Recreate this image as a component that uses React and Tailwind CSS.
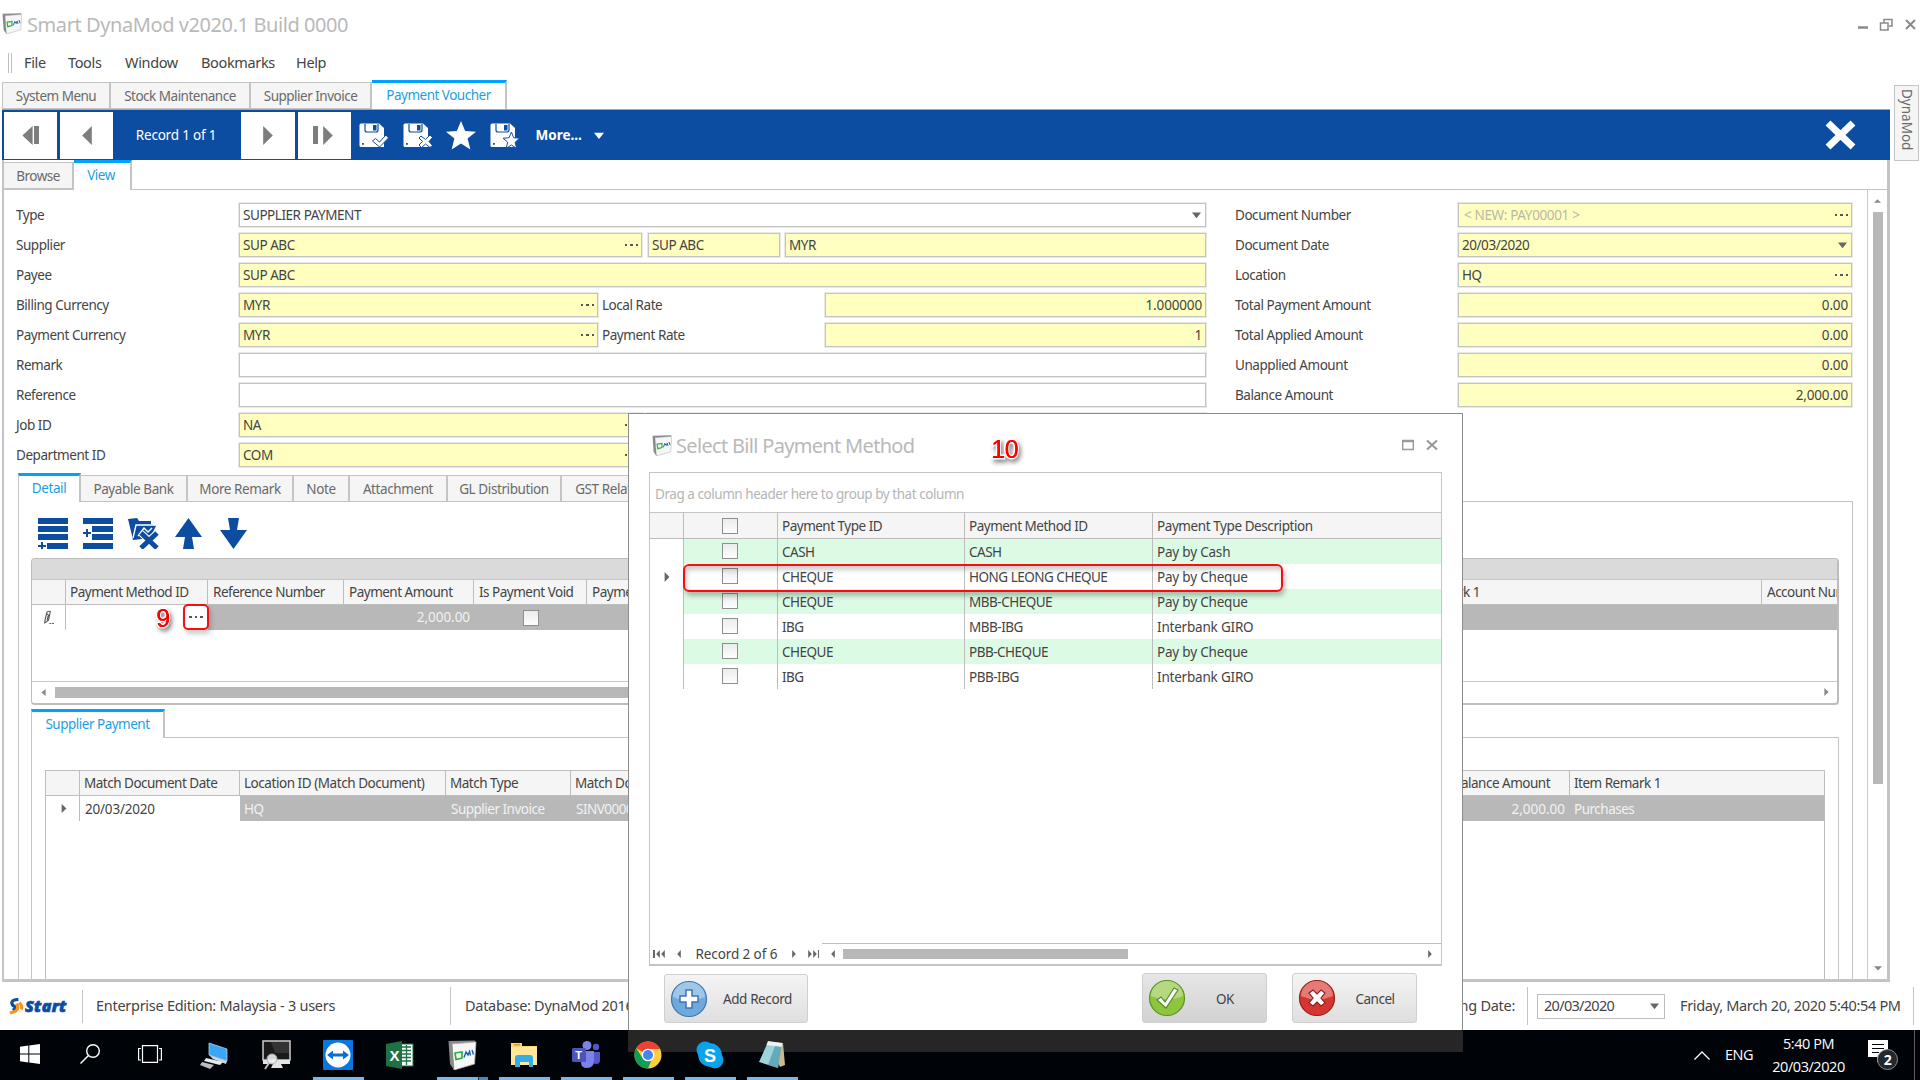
import React from "react";
import clsx from "clsx";

const docTabs = [
  { label: "System Menu", width: "w-[109px]" },
  { label: "Stock Maintenance", width: "w-[140px]" },
  { label: "Supplier Invoice", width: "w-[121px]" },
  { label: "Payment Voucher", width: "w-[135px]", active: true },
];

const detailTabs = [
  { label: "Detail", width: "w-[63px]", active: true },
  { label: "Payable Bank", width: "w-[107px]" },
  { label: "More Remark", width: "w-[106px]" },
  { label: "Note", width: "w-[56px]" },
  { label: "Attachment", width: "w-[98px]" },
  { label: "GL Distribution", width: "w-[114px]" },
  { label: "GST Related", width: "w-[100px]" },
];

const paymentMethods = [
  { type: "CASH", method: "CASH", description: "Pay by Cash" },
  { type: "CHEQUE", method: "HONG LEONG CHEQUE", description: "Pay by Cheque" },
  { type: "CHEQUE", method: "MBB-CHEQUE", description: "Pay by Cheque" },
  { type: "IBG", method: "MBB-IBG", description: "Interbank GIRO" },
  { type: "CHEQUE", method: "PBB-CHEQUE", description: "Pay by Cheque" },
  { type: "IBG", method: "PBB-IBG", description: "Interbank GIRO" },
];

const Triangle = ({ dir = "down", className = "" }) => {
  const points = {
    down: "0,2 10,2 5,9",
    up: "0,8 10,8 5,2",
    left: "8,0 8,10 2,5",
    right: "2,0 2,10 8,5",
  };
  return (
    <svg viewBox="0 0 10 10" preserveAspectRatio="none" className={clsx("shrink-0", className)} fill="currentColor">
      <polygon points={points[dir]} />
    </svg>
  );
};

const DmIcon = ({ className }) => (
  <svg viewBox="0 0 28 30" className={clsx("shrink-0", className)}>
    <path d="M0.500 1 L27 0.500 L27.500 3 L4 5 Z" fill="#8a8a8a" />
    <path d="M4 4 L28 2 L26.500 24 L6 30 Z" fill="#f6f6f6" stroke="#b5b5b5" strokeWidth="0.800" />
    <path d="M0.500 1 L4 4 L6 30 L2 24 Z" fill="#8a8a8a" />
    <path d="M7 13 L14 12 V18 L8 19.500 Z" fill="none" stroke="#2fb043" strokeWidth="1.700" />
    <path d="M16 17.500 L18 12 L20 15 L21.500 11.500 L22.500 15.500 M24 10 L25.500 14.500" fill="none" stroke="#1a5fb4" strokeWidth="1.400" />
  </svg>
);

const Tab = ({ label, width, active, className }) => (
  <div
    className={clsx(
      "flex shrink-0 items-center justify-center border-r-2 border-[#c4c4c4] whitespace-nowrap",
      width,
      active
        ? "h-[29px] border-t-[3px] border-t-[#00a2ff] bg-white pb-0.5 text-[#1b9fe4]"
        : "h-[27px] border-y border-y-[#c4c4c4] bg-[#f5f5f5] pt-px text-[#6a6a6a]",
      className
    )}
  >
    {label}
  </div>
);

const Field = ({ value, width, white, dots, arrow, right, muted }) => (
  <div
    className={clsx(
      "flex h-6 shrink-0 items-center justify-between border border-[#c3c3c3] px-[3px] whitespace-nowrap shadow-[0_0_0_1px_#e9e9e9]",
      width,
      white ? "bg-white" : "bg-[#ffffbf]",
      muted && "text-[#b9b9a5]"
    )}
  >
    <span className={clsx(right && "ml-auto tracking-[-0.150px]", muted && "pl-0.5 tracking-[-0.350px]")}>{value}</span>
    {dots && <Dots />}
    {arrow && <Triangle className="mr-px h-[8px] w-[9px] text-[#666]" />}
  </div>
);

const Dots = () => (
  <span className="flex gap-[3px]">
    <i className="size-[2.500px] bg-[#555]" />
    <i className="size-[2.500px] bg-[#555]" />
    <i className="size-[2.500px] bg-[#555]" />
  </span>
);

const Checkbox = () => (
  <span className="size-4 border-[1.500px] border-[#8f8f8f] bg-linear-to-b from-[#ececec] to-[#fdfdfd]" />
);

const Cell = ({ width, children, className }) => (
  <div
    className={clsx(
      "flex h-full shrink-0 items-center overflow-hidden border-r border-[#bdbdbd] pl-1 whitespace-nowrap",
      width,
      className
    )}
  >
    {children}
  </div>
);

const Floppy = ({ children }) => (
  <svg viewBox="0 0 30 25" className="h-[25px] w-[30px]">
    <path d="M2 0.500 H20 L25 5 V24 H2 Q0.500 24 0.500 22.500 V2 Q0.500 0.500 2 0.500 Z" fill="#fff" />
    <path d="M6 1 V7 Q6 9 8 9 H17 Q19 9 19 7 V1" fill="none" stroke="#0d4da1" strokeWidth="1.200" />
    <rect x="14" y="2" width="3.500" height="5.500" fill="#0d4da1" />
    <rect x="3" y="20" width="1.800" height="1.800" fill="#0d4da1" />
    {children}
  </svg>
);

const STAR = "12,0 15.300,8.200 24,8.900 17.300,14.500 19.500,23.500 12,18.600 4.500,23.500 6.700,14.500 0,8.900 8.700,8.200";

const RecordBar = () => (
  <div className="flex h-[51px] items-center border-t border-[#9aa7b8] bg-[#0d4da1] pl-0.5 text-white">
    <div className="flex h-[47px] w-[53px] items-center justify-center bg-white pr-1 text-[#7d7d7d]">
      <Triangle dir="left" className="-mr-0.5 h-[19px] w-[17px]" />
      <span className="h-[18px] w-[5px] bg-current" />
    </div>
    <div className="ml-[3px] flex h-[47px] w-[53px] items-center justify-center bg-white text-[#7d7d7d]">
      <Triangle dir="left" className="h-[19px] w-[16px]" />
    </div>
    <div className="w-[128px] pr-0.5 text-center tracking-[-0.200px]">Record 1 of 1</div>
    <div className="flex h-[47px] w-[54px] items-center justify-center bg-white text-[#7d7d7d]">
      <Triangle dir="right" className="h-[19px] w-[16px]" />
    </div>
    <div className="ml-[3px] flex h-[47px] w-[53px] items-center justify-center bg-white text-[#7d7d7d]">
      <span className="h-[18px] w-[5px] bg-current" />
      <Triangle dir="right" className="ml-0.5 h-[19px] w-[16px]" />
    </div>
    <div className="ml-[8px] flex items-center gap-[13.500px]">
      <Floppy>
        <path d="M13.500 18 L16.500 15.500 L20.500 19 L27 12 L29.500 15 L20.500 24 Z" fill="#fff" stroke="#0d4da1" strokeWidth="1" />
      </Floppy>
      <Floppy>
        <path d="M18 13 L22.500 16.500 L27 12 L29.500 14.500 L26 18.500 L29.500 22.500 L27 24.500 L22.500 21 L18.500 24.500 L16 22 L19.500 18.500 L16 15 Z" fill="#fff" stroke="#0d4da1" strokeWidth="1" />
      </Floppy>
      <svg viewBox="0 0 24 24" className="h-[29px] w-[30px]" preserveAspectRatio="none" fill="#fff">
        <polygon points={STAR} />
      </svg>
      <Floppy>
        <polygon points={STAR} transform="translate(13 9) scale(0.700)" fill="#fff" stroke="#0d4da1" strokeWidth="1.400" />
      </Floppy>
    </div>
    <span className="ml-4 font-bold tracking-[0px]">More...</span>
    <Triangle className="ml-3 h-[9px] w-[10px]" />
    <svg viewBox="0 0 31 30" className="mr-[34px] ml-auto h-[30px] w-[31px]">
      <path d="M3 3 L28 27 M28 3 L3 27" stroke="#fff" strokeWidth="7" />
    </svg>
  </div>
);

const Label = ({ width, children }) => (
  <div className={clsx("shrink-0 whitespace-nowrap", width)}>{children}</div>
);

const Row = ({ children }) => <div className="flex h-6 items-center">{children}</div>;

const Form = () => (
  <div className="flex pt-[13px] pl-[12px] tracking-[-0.450px]">
    <div className="flex w-[1219px] flex-col gap-1.5">
      <Row>
        <Label width="w-[223px]">Type</Label>
        <Field width="w-[967px]" white arrow value="SUPPLIER PAYMENT" />
      </Row>
      <Row>
        <Label width="w-[223px]">Supplier</Label>
        <Field width="w-[403px]" dots value="SUP ABC" />
        <div className="w-[6px]" />
        <Field width="w-[132px]" value="SUP ABC" />
        <div className="w-[5px]" />
        <Field width="w-[421px]" value="MYR" />
      </Row>
      <Row>
        <Label width="w-[223px]">Payee</Label>
        <Field width="w-[967px]" value="SUP ABC" />
      </Row>
      <Row>
        <Label width="w-[223px]">Billing Currency</Label>
        <Field width="w-[359px]" dots value="MYR" />
        <Label width="w-[227px] pl-1">Local Rate</Label>
        <Field width="w-[381px]" right value="1.000000" />
      </Row>
      <Row>
        <Label width="w-[223px]">Payment Currency</Label>
        <Field width="w-[359px]" dots value="MYR" />
        <Label width="w-[227px] pl-1">Payment Rate</Label>
        <Field width="w-[381px]" right value="1" />
      </Row>
      <Row>
        <Label width="w-[223px]">Remark</Label>
        <Field width="w-[967px]" white />
      </Row>
      <Row>
        <Label width="w-[223px]">Reference</Label>
        <Field width="w-[967px]" white />
      </Row>
      <Row>
        <Label width="w-[223px]">Job ID</Label>
        <Field width="w-[403px]" dots value="NA" />
        <div className="w-[6px]" />
        <Field width="w-[558px]" />
      </Row>
      <Row>
        <Label width="w-[223px]">Department ID</Label>
        <Field width="w-[403px]" dots value="COM" />
      </Row>
    </div>
    <div className="flex flex-col gap-1.5">
      <Row>
        <Label width="w-[223px]">Document Number</Label>
        <Field width="w-[394px]" dots muted value="< NEW: PAY00001 >" />
      </Row>
      <Row>
        <Label width="w-[223px]">Document Date</Label>
        <Field width="w-[394px]" arrow value="20/03/2020" />
      </Row>
      <Row>
        <Label width="w-[223px]">Location</Label>
        <Field width="w-[394px]" dots value="HQ" />
      </Row>
      <Row>
        <Label width="w-[223px]">Total Payment Amount</Label>
        <Field width="w-[394px]" right value="0.00" />
      </Row>
      <Row>
        <Label width="w-[223px]">Total Applied Amount</Label>
        <Field width="w-[394px]" right value="0.00" />
      </Row>
      <Row>
        <Label width="w-[223px]">Unapplied Amount</Label>
        <Field width="w-[394px]" right value="0.00" />
      </Row>
      <Row>
        <Label width="w-[223px]">Balance Amount</Label>
        <Field width="w-[394px]" right value="2,000.00" />
      </Row>
    </div>
  </div>
);

const GridTools = () => (
  <div className="flex h-[31px] items-center pl-[19px] text-[#0d4da1]">
    <svg viewBox="0 0 30 31" className="w-[30px]" fill="currentColor">
      <path d="M0 0H30V6H0ZM0 8H30V14H0ZM0 16H30V22H0ZM9 25H30V31H9ZM0 27H3V24H5V27H8V29H5V31H3V29H0Z" />
    </svg>
    <svg viewBox="0 0 30 31" className="ml-[15px] w-[30px]" fill="currentColor">
      <path d="M0 0H30V6H0ZM9 8H30V14H9ZM9 16H30V22H9ZM0 25H30V31H0ZM0 14H3V11H5V14H8V16H5V19H3V16H0Z" />
    </svg>
    <svg viewBox="0 0 31 31" className="ml-[15px] w-[31px]">
      <path d="M0 1 L9 0 L11 3 H23 V6 L28 8 L24 16 L14 21 L5 22 Z" fill="currentColor" />
      <path d="M5 20 L8 7 H27 M10 18 L16 10 L20 14 L24 10" fill="none" stroke="#fff" strokeWidth="1.400" />
      <path d="M13 15 L29 30 M29 15 L13 30" stroke="#fff" strokeWidth="7" />
      <path d="M13 15 L29 30 M29 15 L13 30" stroke="currentColor" strokeWidth="5" />
    </svg>
    <svg viewBox="0 0 27 31" className="ml-4 w-[27px]" fill="currentColor">
      <path d="M13.500 0 L27 19 H17 L19 31 H8 L10 19 H0 Z" />
    </svg>
    <svg viewBox="0 0 27 31" className="ml-[18px] w-[27px]" fill="currentColor">
      <path d="M13.500 31 L27 12 H17 L19 0 H8 L10 12 H0 Z" />
    </svg>
  </div>
);

const PaymentGrid = () => (
  <div className="relative ml-[12px] h-[147px] w-[1808px] shrink-0 overflow-hidden rounded border border-r-2 border-b-2 border-[#bdbdbd]">
    <div className="h-[21px] border-b border-[#c4c4c4] bg-[#dadada]" />
    <div className="flex h-[25px] border-b border-[#bdbdbd] bg-[#f5f5f5]">
      <Cell width="w-[34px]" />
      <Cell width="w-[142px]">Payment Method ID</Cell>
      <Cell width="w-[136px]" className="pl-[5px]!">Reference Number</Cell>
      <Cell width="w-[130px]" className="pl-[5px]!">Payment Amount</Cell>
      <Cell width="w-[113px]" className="pl-[5px]!">Is Payment Void</Cell>
      <Cell width="w-[783px]" className="pl-[5px]!">Payment Void Date</Cell>
      <Cell width="w-[392px]" className="pl-[23px]!">Item Remark 1</Cell>
      <div className="pl-[5px] leading-6 whitespace-nowrap">Account Number</div>
    </div>
    <div className="flex h-[25px] bg-[#b8b8b8] text-[#f2f2f2]">
      <Cell width="w-[34px]" className="justify-center bg-white pr-1">
        <svg viewBox="0 0 12 16" className="h-[15px] w-[11px]" fill="none" stroke="#555" strokeWidth="1.200">
          <path d="M2 12 L4 3 Q5 0.500 8 1.500 L6 11 L2 14 Z M4 4 L6 5 M4.500 11 L6 5" />
          <path d="M7 14.500 H12" strokeDasharray="2 1" />
        </svg>
      </Cell>
      <div className="w-[142px] bg-white" />
      <div className="flex w-[266px] items-center justify-end pr-1 tracking-[-0.050px]">2,000.00</div>
      <div className="flex w-[113px] items-center justify-center">
        <Checkbox />
      </div>
    </div>
    <div className="h-[52px] border-b border-[#c9c9c9]" />
    <div className="flex h-[20px] items-center gap-2 pr-[7px] pl-2 text-[#888]">
      <Triangle dir="left" className="h-[7px] w-[7px]" />
      <div className="h-[11px] w-[1100px] bg-[#b8b8b8]" />
      <Triangle dir="right" className="ml-auto h-[8px] w-[7px]" />
    </div>
  </div>
);

const MatchGrid = () => (
  <div className="ml-[13px] w-[1780px] flex-1 border border-b-0 border-[#bdbdbd]">
    <div className="flex h-[25px] border-b border-[#bdbdbd] bg-[#f5f5f5]">
      <Cell width="w-[34px]" />
      <Cell width="w-[160px]">Match Document Date</Cell>
      <Cell width="w-[206px]" className="tracking-[-0.450px]">Location ID (Match Document)</Cell>
      <Cell width="w-[125px]">Match Type</Cell>
      <Cell width="w-[867px]">Match Document No</Cell>
      <Cell width="w-[132px]" className="justify-end pr-[19px]">Balance Amount</Cell>
      <div className="pl-1 leading-6">Item Remark 1</div>
    </div>
    <div className="flex h-[25px] bg-[#b8b8b8] text-[#f2f2f2]">
      <Cell width="w-[34px]" className="justify-center bg-white pr-0.5 text-[#666]">
        <Triangle dir="right" className="h-[9px] w-[8px]" />
      </Cell>
      <div className="w-[160px] bg-white pl-[5px] leading-[26px] tracking-[-0.200px] text-[#444]">20/03/2020</div>
      <div className="w-[206px] pl-[4px] leading-[26px]">HQ</div>
      <div className="w-[125px] pl-[5px] leading-[26px]">Supplier Invoice</div>
      <div className="w-[867px] pl-[5px] leading-[26px]">SINV00001</div>
      <div className="w-[132px] pr-[5px] text-right leading-[26px] tracking-[0px]">2,000.00</div>
      <div className="pl-1 leading-[26px]">Purchases</div>
    </div>
  </div>
);

const StatusBar = () => (
  <div className="flex h-[48px] shrink-0 items-center text-[14.500px] tracking-[-0.280px] whitespace-nowrap text-[#444]">
    <div className="flex h-[33px] w-[83px] items-center border-r border-[#c4c4c4] pl-[9px]">
      <svg viewBox="0 0 16 18" className="mr-px h-[17px] w-[15px]" fill="none" strokeWidth="3.400">
        <path d="M10 1.500 Q3 2 3 5 Q3 7.500 6 9 Q8 11 4 13" stroke="#0d4da1" />
        <path d="M11 5 Q15 9 13 12 M8 6 Q11 11 7 14 L1 16" stroke="#f7941d" />
      </svg>
      <span className="text-[16px] font-black tracking-[0.300px] text-[#0d4da1] italic [-webkit-text-stroke:0.700px_#0d4da1]">
        Start
      </span>
    </div>
    <div className="flex h-[38px] w-[368px] items-center border-r border-[#c4c4c4] pl-[13px]">
      Enterprise Edition: Malaysia - 3 users
    </div>
    <div className="w-[300px] pl-[14px]">Database: DynaMod 2016</div>
    <div className="ml-auto flex h-[38px] items-center border-r border-[#c4c4c4] pr-[12px]">Working Date:</div>
    <div className="ml-[9px] flex h-[25px] w-[128px] items-center justify-between border border-[#bdbdbd] px-[6px] tracking-[-0.700px]">
      20/03/2020
      <Triangle className="-mr-px h-[8px] w-[9px] text-[#666]" />
    </div>
    <div className="mr-[6px] ml-[15px] flex h-[38px] w-[234px] items-center border-r border-[#c4c4c4] tracking-[-0.330px]">
      Friday, March 20, 2020 5:40:54 PM
    </div>
  </div>
);

const taskbarApps = [
  {
    id: "pc",
    icon: (
      <svg viewBox="0 0 30 30" className="size-[30px]">
        <path d="M10 3 L28 9 L28 21 L10 15 Z" fill="#3ea5f5" stroke="#9fd4fa" strokeWidth="0.800" />
        <path d="M10 15 L28 21 L27 24 L14 19 Z" fill="#cfd6db" />
        <path d="M7 18 L24 22 L21 25 L5 21 Z" fill="#e7eaec" />
        <path d="M3 22 L15 25 L11 29 L1 25 Z" fill="#b7bfc4" />
      </svg>
    ),
  },
  {
    id: "remote",
    icon: (
      <svg viewBox="0 0 30 30" className="size-[30px]">
        <rect x="2" y="1" width="27" height="19" fill="#1a1a1a" stroke="#cfcfcf" strokeWidth="1.500" />
        <path d="M10 2 L14 13 H28 V2 Z" fill="#333" />
        <path d="M2 20 H29 V24 H20 L22 28 H10 L12 24 H2 Z" fill="#e4e4e4" />
        <circle cx="11" cy="19" r="5" fill="#e9ecee" fillOpacity="0.900" stroke="#aaa" />
        <path d="M8 23 L4 29" stroke="#bbb" strokeWidth="2" />
      </svg>
    ),
  },
  {
    id: "teamviewer",
    bar: true,
    icon: (
      <svg viewBox="0 0 30 30" className="size-[30px]">
        <rect width="30" height="30" rx="1" fill="#0b77dd" />
        <circle cx="15" cy="15" r="12.500" fill="#fff" />
        <path d="M4 15 L10 10.500 V13.500 H20 V10.500 L26 15 L20 19.500 V16.500 H10 V19.500 Z" fill="#0b6fd2" />
      </svg>
    ),
  },
  {
    id: "excel",
    icon: (
      <svg viewBox="0 0 30 30" className="size-[30px]">
        <rect x="15" y="4" width="13" height="22" fill="#fff" stroke="#1e7145" />
        <path d="M17 7H26M17 10.500H26M17 14H26M17 17.500H26M17 21H26M21.500 5V25" stroke="#1e7145" strokeWidth="1.300" />
        <path d="M1 4 L17 1 V29 L1 26 Z" fill="#1e7145" />
        <text x="4.500" y="20.500" fontSize="15" fontWeight="bold" fill="#fff" fontFamily="Liberation Sans">X</text>
      </svg>
    ),
  },
  { id: "dynamod", bar: true, stacked: true, icon: <DmIcon className="size-[30px]" /> },
  {
    id: "explorer",
    bar: true,
    icon: (
      <svg viewBox="0 0 30 30" className="size-[30px]">
        <path d="M2 3 H13 V6 H28 V25 H2 Z" fill="#f8d775" />
        <path d="M2 7 H28 V25 H2 Z" fill="#ffe69a" />
        <rect x="5" y="4" width="6" height="1.500" fill="#e49b1d" />
        <path d="M6 27 V18 Q6 15 9 15 H21 Q24 15 24 18 V27 H20 V22 H11 V27 Z" fill="#35aee8" />
      </svg>
    ),
  },
  {
    id: "teams",
    bar: true,
    icon: (
      <svg viewBox="0 0 30 30" className="size-[30px]">
        <circle cx="16" cy="5.500" r="4.500" fill="#7b83eb" />
        <circle cx="25" cy="7" r="3.200" fill="#5059c9" />
        <path d="M21 12 H29 V20 Q29 24 25 24 Q22 24 21 22 Z" fill="#5059c9" />
        <path d="M10 11 H23 V20 Q23 28 16 28 Q10 28 10 22 Z" fill="#7b83eb" />
        <rect x="1" y="8" width="14" height="14" rx="1.500" fill="#4b53bc" />
        <text x="4.200" y="19" fontSize="11" fontWeight="bold" fill="#fff" fontFamily="Liberation Sans">T</text>
      </svg>
    ),
  },
  {
    id: "chrome",
    bar: true,
    icon: (
      <svg viewBox="0 0 30 30" className="size-[30px]">
        <circle cx="15" cy="15" r="13.500" fill="#ffcd40" />
        <path d="M15 15 L3.300 8.200 A13.500 13.500 0 0 1 26.700 8.200 L27 9 H15 Z" fill="#ea4335" />
        <path d="M15 28.500 A13.500 13.500 0 0 1 3.300 8.200 L9.500 18 L15 21 L18.500 20 Z" fill="#0f9d58" />
        <circle cx="15" cy="15" r="6.300" fill="#fff" />
        <circle cx="15" cy="15" r="5" fill="#4285f4" />
      </svg>
    ),
  },
  {
    id: "skype",
    bar: true,
    icon: (
      <svg viewBox="0 0 30 30" className="size-[30px]">
        <circle cx="10" cy="10" r="8.500" fill="#0a9fe6" />
        <circle cx="20" cy="20" r="8.500" fill="#0a9fe6" />
        <circle cx="15" cy="15" r="11.800" fill="#0ba4ea" />
        <text x="9" y="21.500" fontSize="18" fontWeight="bold" fill="#fff" fontFamily="Liberation Sans">S</text>
      </svg>
    ),
  },
  {
    id: "notepad",
    bar: true,
    icon: (
      <svg viewBox="0 0 30 30" className="size-[30px]">
        <path d="M12 2 L26 3 L28 25 L23 27 Z" fill="#c9b98b" />
        <path d="M11 2 L25 4 L21 28 L2 22 Z" fill="#9fd3dc" />
        <path d="M11 1 L25 3 L24.500 7 L9.500 5 Z" fill="#e8f4f5" />
        <path d="M18 6 L24.500 7 L21 28 L11 25 Z" fill="#3d8fa0" fillOpacity="0.600" />
      </svg>
    ),
  },
];

const Taskbar = () => (
  <div className="relative flex h-[50px] shrink-0 bg-[#000308] text-white">
    <div className="absolute top-0 left-[628px] h-[22px] w-[835px] bg-[#262626]" />
    <div className="relative flex w-[183px] items-center pb-0.5">
      <svg viewBox="0 0 20 20" className="ml-5 size-5" fill="#fff">
        <path d="M0 2.800 L8.300 1.600 V9.500 H0 Z M9.300 1.500 L20 0 V9.500 H9.300 Z M0 10.500 H8.300 V18.400 L0 17.200 Z M9.300 10.500 H20 V20 L9.300 18.500 Z" />
      </svg>
      <svg viewBox="0 0 20 20" className="ml-10 size-5" fill="none" stroke="#fff" strokeWidth="1.400">
        <circle cx="13" cy="7" r="6.300" />
        <path d="M8.500 11.500 L0.500 19.500" />
      </svg>
      <svg viewBox="0 0 24 18" className="ml-[38px] h-[18px] w-6" fill="none" stroke="#fff" strokeWidth="1.200">
        <path d="M4.500 0.600 H19.500 V17.400 H4.500 Z M3 3.500 H0.600 V15 H3 M21 3.500 H23.400 V15 H21" />
      </svg>
    </div>
    {taskbarApps.map(({ id, icon, bar, stacked }) => (
      <div key={id} className="relative flex w-[62px] flex-col items-center pt-[10px]">
        {icon}
        {bar && (
          <div className="mt-[7px] flex h-[3px] w-[51px] bg-[#76b9ed]">
            {stacked && <span className="ml-auto w-2.5 border-l border-[#1c3350] bg-[#5187b5]" />}
          </div>
        )}
      </div>
    ))}
    <div className="relative ml-auto flex items-center font-['Open_Sans'] text-[14.500px] tracking-[-0.450px]">
      <svg viewBox="0 0 16 9" className="h-[9px] w-4" fill="none" stroke="#fff" strokeWidth="1.300">
        <path d="M0.500 8.500 L8 1 L15.500 8.500" />
      </svg>
      <span className="ml-[15px] w-[30px]">ENG</span>
      <div className="ml-[14px] w-[79px] text-center leading-[23px]">
        <div>5:40 PM</div>
        <div>20/03/2020</div>
      </div>
      <svg viewBox="0 0 32 32" className="mr-[15px] ml-[19px] size-8">
        <path d="M1 1 H21 V18 H15 L10 23 V18 H1 Z" fill="#fff" />
        <path d="M5 5.500 H17 M5 9.500 H17 M5 13.500 H12" stroke="#000308" strokeWidth="1.200" />
        <circle cx="20.500" cy="20.500" r="10" fill="#24272b" stroke="#8a8d90" />
        <text x="16.700" y="25.800" fontSize="14" fontWeight="bold" fill="#fff" fontFamily="Open Sans">2</text>
      </svg>
    </div>
    <div className="h-full w-[6px] border-l border-[#5a5d61]" />
  </div>
);

const DialogButton = ({ label, width, color, rim, children, className }) => (
  <div
    className={clsx(
      "flex items-center rounded-[3px] border border-[#cfcfcf] bg-linear-to-b from-[#f4f4f4] to-[#dfdfdf] pl-[5px]",
      width,
      className
    )}
  >
    <svg viewBox="0 0 38 38" className="size-[38px] shrink-0">
      <circle cx="19" cy="19" r="17.500" fill={color} stroke={rim} strokeWidth="1.200" />
      <path d="M3 17 A16 15 0 0 1 35 17 Q19 24 3 17 Z" fill="#fff" fillOpacity="0.350" />
      {children}
    </svg>
    <span className="flex-1 pt-0.5 text-center">{label}</span>
  </div>
);

const Callout = ({ children, className }) => (
  <span className={clsx("absolute grid font-['Liberation_Sans'] leading-none", className)}>
    <span className="tracking-[-0.500px] text-[#f00] [filter:drop-shadow(2px_3px_2px_rgba(0,0,0,0.45))] [paint-order:stroke] [text-shadow:0.500px_0_0_#f00] [-webkit-text-stroke:3px_white]">
      {children}
    </span>
  </span>
);

const Dialog = () => (
  <div className="absolute top-[413px] left-[628px] flex h-[617px] w-[835px] flex-col border border-b-0 border-[#8d8d8d] bg-white">
    <div className="flex h-[58px] items-center pt-1.5 pr-[24px] pl-[23px]">
      <DmIcon className="mb-0.5 h-[21px] w-[20px]" />
      <span className="ml-1 text-[20px] tracking-[-0.680px] text-[#b9b9b9]">Select Bill Payment Method</span>
      <svg viewBox="0 0 36 12" className="mb-0.5 ml-auto h-3 w-9" fill="none" stroke="#999">
        <path d="M0.700 1.500 H11.300 V10.500 H0.700 Z M0.700 2.500 H11.300" strokeWidth="1.400" />
        <path d="M25 1.500 L35 10.500 M35 1.500 L25 10.500" strokeWidth="2.200" />
      </svg>
    </div>
    <div className="mx-5 flex h-[494px] w-[793px] flex-col border border-b-2 border-[#c4c4c4]">
      <div className="flex h-[40px] items-center border-b border-[#c4c4c4] pt-1 pl-[5px] tracking-[-0.450px] text-[#b5b5b5]">
        Drag a column header here to group by that column
      </div>
      <div className="flex h-[26px] shrink-0 border-b border-[#bdbdbd] bg-[#f5f5f5]">
        <Cell width="w-[34px]" />
        <Cell width="w-[94px]" className="justify-center pr-1.5">
          <Checkbox />
        </Cell>
        <Cell width="w-[187px]" className="pt-px">Payment Type ID</Cell>
        <Cell width="w-[188px]" className="pt-px">Payment Method ID</Cell>
        <Cell width="w-[200px]" className="border-r-0 pt-px tracking-[-0.420px]">Payment Type Description</Cell>
      </div>
      {paymentMethods.map(({ type, method, description }, index) => (
        <div key={method} className={clsx("flex h-[25px] shrink-0", index % 2 === 0 ? "bg-[#dcfbe4]" : "bg-white")}>
          <Cell width="w-[34px]" className="justify-center bg-white pr-1 text-[#666]">
            {index === 1 && <Triangle dir="right" className="h-[10px] w-[8px]" />}
          </Cell>
          <Cell width="w-[94px]" className="justify-center pr-1.5 pb-px">
            <Checkbox />
          </Cell>
          <Cell width="w-[187px]" className="pt-px">{type}</Cell>
          <Cell width="w-[188px]" className="pt-px">{method}</Cell>
          <div className="pl-1 leading-[26px] tracking-[-0.200px]">{description}</div>
        </div>
      ))}
      <div className="mt-auto flex h-[21px] text-[#666]">
        <div className="flex w-[172px] items-center pl-[3px]">
          <span className="h-2 w-[1.500px] bg-current" />
          <Triangle dir="left" className="h-2 w-1.5" />
          <Triangle dir="left" className="-ml-px h-2 w-1.5" />
          <Triangle dir="left" className="ml-[10px] h-2 w-1.5" />
          <span className="ml-[14px] w-[84px] pt-px tracking-[-0.100px] whitespace-nowrap text-[#444]">Record 2 of 6</span>
          <Triangle dir="right" className="ml-[11px] h-2 w-1.5" />
          <Triangle dir="right" className="ml-[10px] h-2 w-1.5" />
          <Triangle dir="right" className="-ml-px h-2 w-1.5" />
          <span className="h-2 w-[1.500px] bg-current" />
        </div>
        <div className="flex flex-1 items-center border-t border-[#bdbdbd] pr-[8px] pl-[8px]">
          <Triangle dir="left" className="h-2 w-1.5" />
          <span className="ml-[7px] h-[10px] w-[285px] bg-[#b8b8b8]" />
          <Triangle dir="right" className="ml-auto h-2 w-1.5" />
        </div>
      </div>
    </div>
    <div className="flex pt-[7px] pl-[35px]">
      <DialogButton label="Add Record" width="w-[144px]" color="#6fa9dc" rim="#3f78b5" className="mt-px h-[49px] tracking-[-0.400px]">
        <path d="M16 10 H22 V16 H28 V22 H22 V28 H16 V22 H10 V16 H16 Z" fill="#fff" stroke="#3b74b4" strokeWidth="1.500" />
      </DialogButton>
      <DialogButton
        label="OK"
        width="w-[125px]"
        color="#8cc53e"
        rim="#5d9421"
        className="ml-[334px] h-[50px] border-[#b5b5b5] from-[#e6e6e6]! to-[#d2d2d2]! pr-0.5"
      >
        <path d="M9 21 L13 18 L17 23 L26 9 L30 11 L18 29 Z" fill="#fff" stroke="#5d8a2a" strokeWidth="1.200" />
      </DialogButton>
      <DialogButton label="Cancel" width="w-[125px]" color="#d4372f" rim="#9c1f1a" className="ml-[25px] h-[50px] pr-0.5">
        <path d="M11 14 L15 11 L19 15 L23 11 L27 14 L23 19 L27 24 L23 27 L19 23 L15 27 L11 24 L15 19 Z" fill="#fff" stroke="#8f1f1a" strokeWidth="1.200" />
      </DialogButton>
    </div>
    <Callout className="top-[23px] left-[362px] text-[25px]">10</Callout>
    <div className="absolute top-[150px] left-[54px] h-[28px] w-[600px] rounded-[6px] border-[2.500px] border-[#f50f0f] shadow-[2px_4px_5px_rgba(0,0,0,0.25),inset_2px_4px_5px_rgba(0,0,0,0.2)]" />
  </div>
);

export default function App() {
  return (
    <div className="relative flex h-[1080px] w-[1920px] flex-col overflow-hidden bg-white font-['Noto_Sans',sans-serif] text-[13.500px] tracking-[-0.500px] text-[#444]">
      <div className="flex h-[50px] shrink-0 items-center pl-[2px]">
        <DmIcon className="mb-1 h-[21px] w-[20px]" />
        <span className="ml-[5px] text-[20px] tracking-[-0.420px] text-[#b9b9b9]">Smart DynaMod v2020.1 Build 0000</span>
        <svg viewBox="0 0 60 14" className="mr-[3px] ml-auto h-[14px] w-[60px]" fill="none" stroke="#8a8a8a">
          <path d="M1 9.500 H11" strokeWidth="2.500" />
          <path d="M23.500 5 H31 V12 H23.500 Z M27 4.500 V1.500 H35 V8 H32" strokeWidth="1.500" />
          <path d="M49 2 L58 11 M58 2 L49 11" strokeWidth="2" />
        </svg>
      </div>
      <div className="flex h-[26px] shrink-0 items-center text-[14.500px] tracking-[-0.350px]">
        <div className="ml-[8px] h-5 w-1 border-x border-[#bdbdbd]" />
        <span className="ml-3 w-[44px]">File</span>
        <span className="w-[57px]">Tools</span>
        <span className="w-[76px]">Window</span>
        <span className="w-[95px]">Bookmarks</span>
        <span>Help</span>
      </div>
      <div className="flex h-[906px] shrink-0">
        <div className="ml-0.5 flex w-[1888px] flex-col">
          <div className="flex h-[33px] shrink-0 items-end">
            {docTabs.map((tab) => (
              <Tab key={tab.label} {...tab} className="first:border-l" />
            ))}
          </div>
          <RecordBar />
          <div className="flex min-h-0 flex-1 flex-col border-r-[3px] border-b-[3px] border-l-2 border-[#c4c4c4]">
            <div className="flex h-[30px] shrink-0">
              <div className="flex w-[70px] items-end border-b border-[#c4c4c4]">
                <Tab label="Browse" width="w-full" />
              </div>
              <Tab label="View" width="w-[58px]" active className="h-[30px]! pr-0.5" />
              <div className="flex-1 border-b border-[#c4c4c4]" />
            </div>
            <div className="flex min-h-0 flex-1">
              <div className="flex w-[1863px] flex-col">
                <Form />
                <div className="mt-[6px] ml-[14px] flex min-h-0 w-[1835px] flex-1 flex-col">
                  <div className="flex h-[29px] shrink-0 items-end">
                    {detailTabs.map((tab) => (
                      <Tab
                        key={tab.label}
                        {...tab}
                        className={clsx("tracking-[-0.400px]", tab.active && "border-l border-l-[#c4c4c4]")}
                      />
                    ))}
                    <div className="flex-1 border-b border-[#c4c4c4]" />
                  </div>
                  <div className="flex min-h-0 flex-1 flex-col border-x border-[#c4c4c4] pt-4">
                    <GridTools />
                    <div className="h-[9px] shrink-0" />
                    <PaymentGrid />
                    <div className="mt-1 ml-[12px] flex min-h-0 w-[1808px] flex-1 flex-col">
                      <div className="flex shrink-0">
                        <Tab label="Supplier Payment" width="w-[134px]" active className="border-l border-l-[#c4c4c4]" />
                        <div className="flex-1 border-b border-[#c4c4c4]" />
                      </div>
                      <div className="flex flex-1 flex-col border-x border-[#c4c4c4] pt-8">
                        <MatchGrid />
                      </div>
                    </div>
                  </div>
                </div>
              </div>
              <div className="flex flex-1 flex-col items-center border-l border-[#c9c9c9] pt-2 pb-2 text-[#888]">
                <Triangle dir="up" className="h-1.5 w-[7px]" />
                <div className="mt-2 h-[572px] w-[10px] bg-[#b8b8b8]" />
                <Triangle className="mt-auto h-1.5 w-[8px]" />
              </div>
            </div>
          </div>
        </div>
        <div className="mt-[9px] ml-1 flex h-[76px] w-[25px] items-center justify-center border border-[#c4c4c4] bg-[#f5f5f5] text-[13.500px] tracking-[0px] text-[#6a6a6a]">
          <span className="pb-1.5 [writing-mode:vertical-rl]">DynaMod</span>
        </div>
      </div>
      <StatusBar />
      <Taskbar />
      <Dialog />
      <Callout className="top-[606px] left-[156px] text-[25px]">9</Callout>
      <div className="absolute top-[604px] left-[183px] flex h-[26px] w-[26px] items-center justify-center rounded-[5px] border-[2.500px] border-[#f50f0f] bg-white shadow-[2px_4px_5px_rgba(0,0,0,0.2)]">
        <Dots />
      </div>
    </div>
  );
}
